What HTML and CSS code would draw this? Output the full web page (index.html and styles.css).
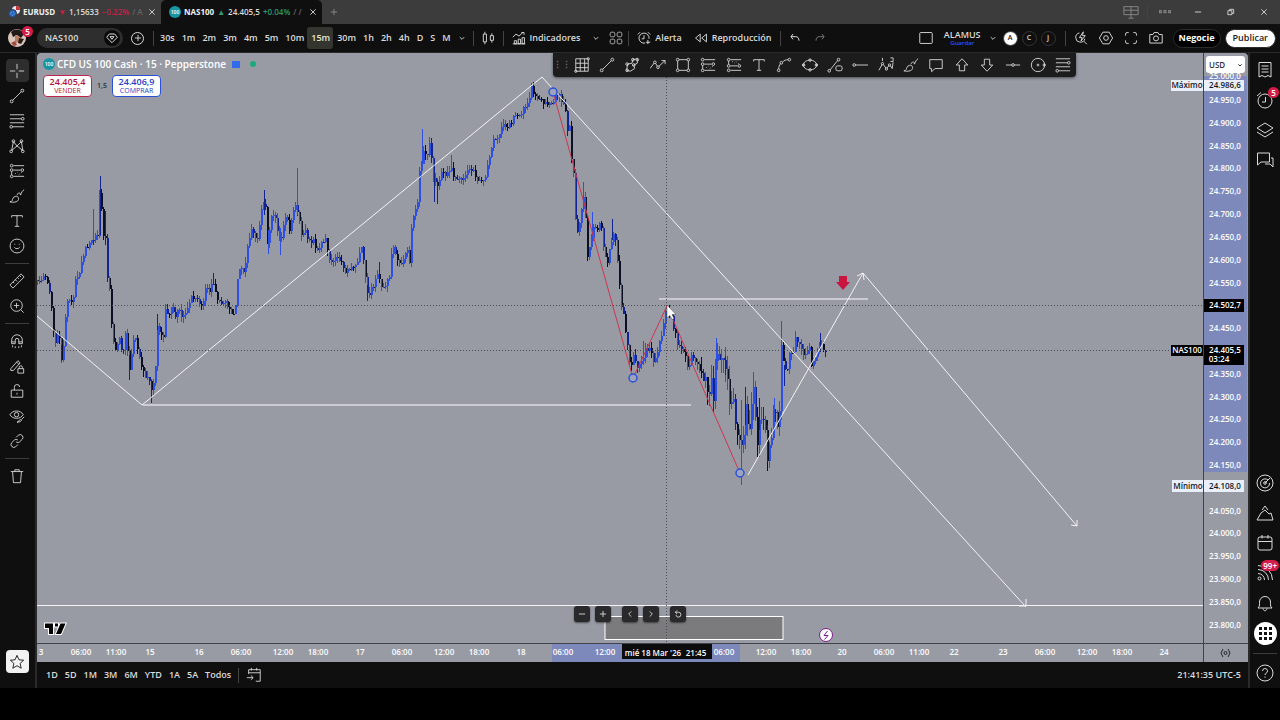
FILE: index.html
```html
<!DOCTYPE html>
<html lang="es">
<head>
    <meta charset="UTF-8">
    <title>NAS100</title>
    <link rel="stylesheet" href="styles.css">
</head>
<body>
    <svg class="defs" aria-hidden="true">
        <symbol id="i-close" viewBox="0 0 18 18"><path d="M3 3l12 12M15 3L3 15"/></symbol>
        <symbol id="i-plus" viewBox="0 0 18 18"><path d="M9 2v14M2 9h14"/></symbol>
        <symbol id="i-minus" viewBox="0 0 18 18"><path d="M2 9h14"/></symbol>
        <symbol id="i-down" viewBox="0 0 18 18"><path d="M4 7l5 5 5-5"/></symbol>
        <symbol id="i-left" viewBox="0 0 18 18"><path d="M12 3L6 9l6 6"/></symbol>
        <symbol id="i-right" viewBox="0 0 18 18"><path d="M6 3l6 6-6 6"/></symbol>
        <symbol id="i-reset" viewBox="0 0 18 18"><path d="M3 5h7a5.500 5.500 0 1 1-5.500 6M7 1L3 5l4 4"/></symbol>
        <symbol id="i-cross" viewBox="0 0 18 18"><path d="M9 1v6M9 11v6M1 9h6M11 9h6"/></symbol>
        <symbol id="i-line" viewBox="0 0 18 18"><circle cx="3" cy="15" r="1.600"/><circle cx="15" cy="3" r="1.600"/><path d="M4.200 13.800L13.800 4.200"/></symbol>
        <symbol id="i-fib" viewBox="0 0 18 18"><path d="M1 2h16M1 6.500h13M1 11h16M4 15.500h13"/><circle cx="15.500" cy="6.500" r="1.500"/><circle cx="2.500" cy="15.500" r="1.500"/></symbol>
        <symbol id="i-pattern" viewBox="0 0 18 18"><path d="M3 14L5 4l4 5 5-5 1.500 10L9 9l-6 5"/><circle cx="5" cy="3.500" r="1.500"/><circle cx="14" cy="3.500" r="1.500"/><circle cx="2.500" cy="15" r="1.500"/><circle cx="15.500" cy="15" r="1.500"/></symbol>
        <symbol id="i-forecast" viewBox="0 0 18 18"><circle cx="3" cy="3" r="1.500"/><circle cx="3" cy="8" r="1.500"/><circle cx="3" cy="15" r="1.500"/><circle cx="15" cy="8" r="1.500"/><path d="M5 3h12M5 8h8M5 15h12M3 9.500v4"/><path d="M7 12l3-2M11 13l4-3" stroke-dasharray="1 2"/></symbol>
        <symbol id="i-short" viewBox="0 0 18 18"><circle cx="3" cy="3" r="1.500"/><circle cx="3" cy="10" r="1.500"/><circle cx="3" cy="15" r="1.500"/><circle cx="15" cy="10" r="1.500"/><path d="M5 3h12M5 10h8M5 15h12M3 4.500v4"/><path d="M7 5l3 2M11 5l4 3" stroke-dasharray="1 2"/></symbol>
        <symbol id="i-brush" viewBox="0 0 18 18"><path d="M1 15.500c3 0 2.500-2 3.500-4s4-3 5.500-1.500 1 4.500-2 5.500-5 .500-7 0zM9 8c1.500-3 3-4 4 0 1-3 2-5 4-6"/></symbol>
        <symbol id="i-text" viewBox="0 0 18 18"><path d="M3 5V3h12v2M9 3v12M6.500 15h5"/></symbol>
        <symbol id="i-smile" viewBox="0 0 18 18"><circle cx="9" cy="9" r="7.800"/><path d="M6 10.500c1 2 5 2 6 0M6.500 6.500v1M11.500 6.500v1"/></symbol>
        <symbol id="i-ruler" viewBox="0 0 18 18"><path d="M1 13.500L13.500 1 17 4.500 4.500 17zM4.500 10l1.500 1.500M7 7.500l2 2M9.500 5L11 6.500M12 3l1.500 1.500"/></symbol>
        <symbol id="i-zoom" viewBox="0 0 18 18"><circle cx="8.500" cy="8.500" r="6.500"/><path d="M13.500 13.500L16.500 16.500M8.500 5.500v6M5.500 8.500h6"/></symbol>
        <symbol id="i-magnet" viewBox="0 0 18 18"><path d="M3 12V8a6 6 0 0 1 12 0v4h-4V8a2 2 0 0 0-4 0v4zM3 10h4M11 10h4M4 14v2M7 15v2M11 15v2M14 14v2"/></symbol>
        <symbol id="i-penlock" viewBox="0 0 18 18"><path d="M2 12L10 3l2.500 2.500L5 14H2zM8.500 4.500L11 7M10 12h6.500v5H10zM11.500 12v-1.500a1.700 1.700 0 0 1 3.500 0V12"/></symbol>
        <symbol id="i-lock" viewBox="0 0 18 18"><path d="M2.500 8h13v8h-13zM6 8V5a3 3 0 0 1 6-.500M9 11v2"/></symbol>
        <symbol id="i-eye" viewBox="0 0 18 18"><path d="M1 7.500C4 2 13 2 16 7.500 13 13 4 13 1 7.500z"/><circle cx="8.500" cy="7.500" r="2.500"/><path d="M9 16c2 0 2-3 4-3s1 3-4 3zM14 13l3-3"/></symbol>
        <symbol id="i-link" viewBox="0 0 18 18"><path d="M8 5l2.500-2.500a3.200 3.200 0 0 1 4.500 4.500L12 10c-1 1-3 1-4 0M10 13l-2.500 2.500A3.200 3.200 0 0 1 3 11l3-3c1-1 3-1 4 0"/></symbol>
        <symbol id="i-trash" viewBox="0 0 18 18"><path d="M2 4h14M6.500 4V2h5v2M4 4l1 12.500h8L14 4"/></symbol>
        <symbol id="i-star" viewBox="0 0 18 18"><path d="M9 1.500l2.200 5 5.300.5-4 3.600 1.200 5.400L9 13.200 4.300 16l1.200-5.400-4-3.600 5.300-.5z"/></symbol>
        <symbol id="i-layout" viewBox="0 0 18 18"><rect x="1" y="2" width="16" height="14" rx="1"/></symbol>
        <symbol id="i-candles" viewBox="0 0 18 18"><path d="M3 4h4v10H3zM5 1v3M5 14v3M12 6h4v6h-4zM14 3v3M14 12v3"/></symbol>
        <symbol id="i-indic" viewBox="0 0 18 18"><path d="M1 8l4-4 4 2.500L14 2M12 2h3.500v3M3 16.500v-4h3v4zM8 16.500v-6h3v6zM13 16.500v-8h3v8zM1 16.500h16"/></symbol>
        <symbol id="i-tiles" viewBox="0 0 18 18"><rect x="1.500" y="1.500" width="6" height="6" rx="2"/><rect x="10.500" y="1.500" width="6" height="6" rx="2"/><rect x="1.500" y="10.500" width="6" height="6" rx="2"/><rect x="10.500" y="10.500" width="6" height="6" rx="2"/></symbol>
        <symbol id="i-alarm" viewBox="0 0 18 18"><path d="M10.500 15.500A6.500 6.500 0 1 1 15.500 10M9 5.500V10H6M1 4.500L4 1.500M14 1.500l3 3M14 11.500v5.500M11.500 14.500h5.500"/></symbol>
        <symbol id="i-clock" viewBox="0 0 18 18"><circle cx="9" cy="10" r="7"/><path d="M9.500 6v5H6M1 5L5 1.500"/></symbol>
        <symbol id="i-replay" viewBox="0 0 18 18"><path d="M8 4v10L2 9zM16 4v10l-6-5z"/></symbol>
        <symbol id="i-undo" viewBox="0 0 18 18"><path d="M6 3L3 7l3 4M3 7h7c3 0 5 2 5 6"/></symbol>
        <symbol id="i-redo" viewBox="0 0 18 18"><path d="M12 3l3 4-3 4M15 7H8c-3 0-5 2-5 6"/></symbol>
        <symbol id="i-quick" viewBox="0 0 18 18"><path d="M7 2.500a6 6 0 1 0 7 7.500M12.500 13l4 4M12 1L7 8.500h3.500L9 13l5.500-7H11z"/></symbol>
        <symbol id="i-hex" viewBox="0 0 18 18"><path d="M5 1.500h8L17.500 9 13 16.500H5L.5 9z"/><circle cx="9" cy="9" r="3"/></symbol>
        <symbol id="i-full" viewBox="0 0 18 18"><path d="M2 6V4a2 2 0 0 1 2-2h2M12 2h2a2 2 0 0 1 2 2v2M16 12v2a2 2 0 0 1-2 2h-2M6 16H4a2 2 0 0 1-2-2v-2"/></symbol>
        <symbol id="i-camera" viewBox="0 0 18 18"><path d="M1 4.500h4L6.500 2h5L13 4.500h4v11H1z"/><circle cx="9" cy="9.500" r="3.200"/></symbol>
        <symbol id="i-grid" viewBox="0 0 18 18"><path d="M2 2h14v14H2zM7 2v14M12 2v14M2 7h14M2 12h14"/><circle cx="16" cy="2" r="1.300"/><circle cx="2" cy="16" r="1.300"/></symbol>
        <symbol id="i-poly" viewBox="0 0 18 18"><path d="M4 8l5-1 1-4 5-1v5l-4 2 1 4-5 3-4-1z"/><circle cx="3.500" cy="8" r="1.500"/><circle cx="10" cy="3" r="1.500"/><circle cx="15" cy="3" r="1.500"/><circle cx="11" cy="9" r="1.500"/><circle cx="3.500" cy="15" r="1.500"/></symbol>
        <symbol id="i-path" viewBox="0 0 18 18"><path d="M0 13l4.500-6M6.500 7.500L8 10M10 10.500L17 4M13 4h4v4"/><circle cx="5.500" cy="6" r="1.500"/><circle cx="9" cy="11.500" r="1.500"/></symbol>
        <symbol id="i-rect" viewBox="0 0 18 18"><path d="M4.500 3h9M4.500 15h9M3 4.500v9M15 4.500v9"/><circle cx="3" cy="3" r="1.500"/><circle cx="15" cy="3" r="1.500"/><circle cx="3" cy="15" r="1.500"/><circle cx="15" cy="15" r="1.500"/></symbol>
        <symbol id="i-curve" viewBox="0 0 18 18"><path d="M3 13.500C3 11 4 9 5 7.500M7.500 5.500C9 4 11 3 13.500 3"/><circle cx="3" cy="15" r="1.500"/><circle cx="15" cy="3" r="1.500"/><circle cx="6" cy="6.500" r="1.500"/></symbol>
        <symbol id="i-ellipse" viewBox="0 0 18 18"><ellipse cx="9" cy="9" rx="7.500" ry="5.500"/><circle cx="1.800" cy="9" r="1.400"/><circle cx="16.200" cy="9" r="1.400"/><circle cx="9" cy="3.500" r="1.400"/><circle cx="9" cy="14.500" r="1.400"/></symbol>
        <symbol id="i-shape" viewBox="0 0 18 18"><path d="M3.500 14.500L12 4"/><circle cx="2.500" cy="15.500" r="1.500"/><circle cx="13" cy="3" r="1.500"/><rect x="10" y="10" width="7" height="5.500" rx="2"/></symbol>
        <symbol id="i-ray" viewBox="0 0 18 18"><circle cx="2.500" cy="9" r="1.500"/><path d="M4 9h14"/></symbol>
        <symbol id="i-wave" viewBox="0 0 18 18"><path d="M1 15l3.500-6.500M6 8.500l3 4M10 12.500l2.500-3M14 10l2 3 1-7M5 1v3.500M14 1h3v4h-3"/><circle cx="5" cy="7.500" r="1.300"/><circle cx="9.500" cy="13.500" r="1.300"/><circle cx="13" cy="9" r="1.300"/></symbol>
        <symbol id="i-note" viewBox="0 0 18 18"><path d="M2 3h14v10H8l-4 3.500V13H2z"/></symbol>
        <symbol id="i-up" viewBox="0 0 18 18"><path d="M9 2l6.500 7H12v6.500H6V9H2.500z"/></symbol>
        <symbol id="i-dn" viewBox="0 0 18 18"><path d="M9 16l6.500-7H12V2.500H6V9H2.500z"/></symbol>
        <symbol id="i-hline" viewBox="0 0 18 18"><circle cx="9" cy="9" r="1.500"/><path d="M1 9h6.500M10.500 9H17"/></symbol>
        <symbol id="i-circle" viewBox="0 0 18 18"><circle cx="9" cy="9" r="7.500"/><circle cx="9" cy="9" r="1"/><circle cx="16" cy="9" r="1.300"/></symbol>
        <symbol id="i-news" viewBox="0 0 18 18"><path d="M3 1.500h12V16l-3-1.500L9 16l-3-1.500L3 16zM5.500 5h7M5.500 8h7M5.500 11h7"/></symbol>
        <symbol id="i-layers" viewBox="0 0 18 18"><path d="M9 2l8 5-8 5-8-5zM1 11l8 5 8-5"/></symbol>
        <symbol id="i-chat" viewBox="0 0 18 18"><path d="M1.500 2h12v9H5l-3.500 3zM15 7h2v9l-3-3H9"/></symbol>
        <symbol id="i-radar" viewBox="0 0 18 18"><circle cx="9" cy="9" r="8"/><path d="M12 6a4.500 4.500 0 1 0 1.500 3M9 9l5-5"/><circle cx="9" cy="9" r="1.300"/></symbol>
        <symbol id="i-mount" viewBox="0 0 18 18"><path d="M6 6l3-4 3 4M1 16l4-7 4-3 4 4 2-1 2 7z"/></symbol>
        <symbol id="i-cal" viewBox="0 0 18 18"><rect x="2" y="3" width="14" height="13" rx="2"/><path d="M2 7.500h14M6 1v3.500M12 1v3.500"/></symbol>
        <symbol id="i-goto" viewBox="0 0 18 18"><path d="M3 8V3h13v13h-5M3 6.500h13M6 1v3M12 1v3M1 12h7M5.500 9.500L8 12l-2.500 2.500"/></symbol>
        <symbol id="i-feed" viewBox="0 0 18 18"><circle cx="3.500" cy="14.500" r="1.500"/><path d="M2 9.500A6.500 6.500 0 0 1 8.500 16M2 5.500A10.500 10.500 0 0 1 12.500 16M2 1.500A14.500 14.500 0 0 1 16.500 16"/></symbol>
        <symbol id="i-bell" viewBox="0 0 18 18"><path d="M2 14c2-2 1.500-4 1.500-6a5.500 5.500 0 0 1 11 0c0 2-.5 4 1.500 6zM7 14.500c.500 3 3.500 3 4 0"/></symbol>
        <symbol id="i-help" viewBox="0 0 18 18"><circle cx="9" cy="9" r="8"/><path d="M6.500 7a2.500 2.500 0 1 1 3.500 2.300c-.700.400-1 .700-1 1.700M9 12.500v1.200"/></symbol>
        <symbol id="i-panels" viewBox="0 0 18 18"><path d="M1 3h16v9H1zM9 3v9M1 7h16M9 12v4M6 16h6"/></symbol>
        <symbol id="i-dots" viewBox="0 0 18 18"><rect x="0.500" y="7" width="3" height="3"/><rect x="7.500" y="7" width="3" height="3"/><rect x="14.500" y="7" width="3" height="3"/></symbol>
        <symbol id="i-restore" viewBox="0 0 18 18"><path d="M2 6h9v9H2zM6 6V3h9v9h-4"/></symbol>
        <symbol id="i-gem" viewBox="0 0 18 18"><path d="M5 3h8l4 5-8 8-8-8zM6 7l3 4 3-4z"/></symbol>
    </svg>

    <div class="tabs">
        <div class="tab">
            <svg class="pair" viewBox="0 0 12 12"><circle cx="8" cy="4" r="4" fill="#dfe6f5"/><path d="M8 0a4 4 0 0 1 4 4H8z" fill="#c33"/><circle cx="4.500" cy="7.500" r="4" fill="#1d5fb8" stroke="#3c3c3c"/><circle cx="4.500" cy="7.500" r="1.800" fill="none" stroke="#9fc3f0" stroke-dasharray="1 1"/></svg>
            <span class="tab-name">EURUSD</span><span class="neg">▼</span><span>1,15633</span><span class="neg">−0.22%</span><span class="fade">/ A</span>
            <button class="tab-close" aria-label="Cerrar"><svg class="icon tiny"><use href="#i-close"/></svg></button>
        </div>
        <div class="tab active">
            <span class="coin">100</span>
            <span class="tab-name">NAS100</span><span class="pos">▲</span><span>24.405,5</span><span class="pos">+0.04%</span><span class="fade">/ /</span>
            <button class="tab-close" aria-label="Cerrar"><svg class="icon tiny"><use href="#i-close"/></svg></button>
        </div>
        <button class="tab-add" aria-label="Nueva pestaña"><svg class="icon tiny dim"><use href="#i-plus"/></svg></button>
        <div class="window-buttons">
            <button aria-label="Paneles"><svg class="icon dim"><use href="#i-panels"/></svg></button>
            <span class="sep"></span>
            <button aria-label="Más"><svg class="icon small dim"><use href="#i-dots"/></svg></button>
            <button aria-label="Minimizar"><svg class="icon tiny"><use href="#i-minus"/></svg></button>
            <button aria-label="Restaurar"><svg class="icon tiny"><use href="#i-restore"/></svg></button>
            <button aria-label="Cerrar ventana"><svg class="icon tiny"><use href="#i-close"/></svg></button>
        </div>
    </div>

    <header class="header">
        <button class="avatar" aria-label="Perfil">
            <svg viewBox="0 0 18 18"><circle cx="9" cy="9" r="9" fill="#d9c5bb"/><path d="M3 3c4-4 11-3 13 2l-3 4-4-3-4 2z" fill="#231a18"/><path d="M7 6l5 2-1 5-4 1z" fill="#b98066"/><path d="M11 9l5 1-3 5-3-1z" fill="#2b1c1a"/><path d="M3 14l4-2 2 4-3 1z" fill="#a04a3c"/></svg>
            <span class="badge">5</span>
        </button>
        <button class="symbol">NAS100 <span class="gem"><svg class="icon small"><use href="#i-gem"/></svg></span></button>
        <button class="compare" aria-label="Comparar"><svg class="icon tiny"><use href="#i-plus"/></svg></button>
        <span class="sep"></span>
        <div class="intervals">
            <button>30s</button><button>1m</button><button>2m</button><button>3m</button><button>4m</button><button>5m</button><button>10m</button><button class="on">15m</button><button>30m</button><button>1h</button><button>2h</button><button>4h</button><button>D</button><button>S</button><button>M</button>
            <button aria-label="Intervalos"><svg class="icon tiny"><use href="#i-down"/></svg></button>
        </div>
        <span class="sep"></span>
        <button class="tool" aria-label="Velas"><svg class="icon"><use href="#i-candles"/></svg></button>
        <span class="sep"></span>
        <button class="labelled"><svg class="icon"><use href="#i-indic"/></svg>Indicadores</button>
        <button class="tool narrow" aria-label="Favoritos"><svg class="icon tiny"><use href="#i-down"/></svg></button>
        <button class="tool narrow" aria-label="Plantillas"><svg class="icon dim-light"><use href="#i-tiles"/></svg></button>
        <span class="sep"></span>
        <button class="labelled"><svg class="icon"><use href="#i-alarm"/></svg>Alerta</button>
        <button class="labelled"><svg class="icon"><use href="#i-replay"/></svg>Reproducción</button>
        <span class="sep"></span>
        <button class="tool" aria-label="Deshacer"><svg class="icon small"><use href="#i-undo"/></svg></button>
        <button class="tool dim" aria-label="Rehacer"><svg class="icon small"><use href="#i-redo"/></svg></button>

        <div class="header-right">
            <button class="tool" aria-label="Diseño"><svg class="icon"><use href="#i-layout"/></svg></button>
            <button class="layout-name">ALAMUS<span>Guardar</span></button>
            <button class="tool narrow" aria-label="Diseños"><svg class="icon tiny"><use href="#i-down"/></svg></button>
            <button class="letter on">A</button><button class="letter">C</button><button class="letter">J</button>
            <span class="sep"></span>
            <button class="tool" aria-label="Búsqueda"><svg class="icon"><use href="#i-quick"/></svg></button>
            <button class="tool" aria-label="Ajustes"><svg class="icon"><use href="#i-hex"/></svg></button>
            <button class="tool" aria-label="Pantalla completa"><svg class="icon"><use href="#i-full"/></svg></button>
            <button class="tool" aria-label="Captura"><svg class="icon"><use href="#i-camera"/></svg></button>
            <button class="pill">Negocie</button>
            <button class="pill light">Publicar</button>
        </div>
    </header>

    <div class="main">
        <nav class="tools">
            <button class="on" aria-label="Cursor"><svg class="icon"><use href="#i-cross"/></svg></button>
            <button aria-label="Línea"><svg class="icon"><use href="#i-line"/></svg></button>
            <button aria-label="Fibonacci"><svg class="icon"><use href="#i-fib"/></svg></button>
            <button aria-label="Patrones"><svg class="icon"><use href="#i-pattern"/></svg></button>
            <button aria-label="Previsión"><svg class="icon"><use href="#i-forecast"/></svg></button>
            <button aria-label="Pincel"><svg class="icon"><use href="#i-brush"/></svg></button>
            <button aria-label="Texto"><svg class="icon"><use href="#i-text"/></svg></button>
            <button aria-label="Iconos"><svg class="icon"><use href="#i-smile"/></svg></button>
            <hr>
            <button aria-label="Medir"><svg class="icon"><use href="#i-ruler"/></svg></button>
            <button aria-label="Acercar"><svg class="icon"><use href="#i-zoom"/></svg></button>
            <hr>
            <button aria-label="Imán"><svg class="icon"><use href="#i-magnet"/></svg></button>
            <button aria-label="Modo dibujo"><svg class="icon"><use href="#i-penlock"/></svg></button>
            <button aria-label="Bloquear"><svg class="icon"><use href="#i-lock"/></svg></button>
            <button aria-label="Ocultar"><svg class="icon"><use href="#i-eye"/></svg></button>
            <button aria-label="Sincronizar"><svg class="icon"><use href="#i-link"/></svg></button>
            <hr>
            <button aria-label="Eliminar"><svg class="icon"><use href="#i-trash"/></svg></button>
            <button class="star" aria-label="Barra de favoritos"><svg class="icon"><use href="#i-star"/></svg></button>
        </nav>

        <div class="center">
            <div class="chart">
                <svg class="plot" id="plot" viewBox="37 53 1211 609">
                    <rect x="1204" y="76" width="43" height="396" fill="#7e89bb"/>
                    <rect x="552" y="644" width="188" height="18" fill="#7e89bb"/>
                    <path class="axis-line" d="M37 643.500H1248M1203.500 53V662"/>
                    <rect x="605" y="616.500" width="178" height="23" fill="#7b7b7d" stroke="#fff"/>
                    <path class="level" d="M143 405H691M659 299H868"/>
                    <path class="white" d="M37 605.500H1203"/>
                    <g id="candles" shape-rendering="crispEdges"></g>
                    <path class="white" d="M37 316L142 405 542 77 1026 607M748 475L863 273 1077 526"/>
                    <path class="white" d="M1019 606h7v-7M1071 525l6 1v-6M857 276l6-3 1 7"/>
                    <path class="trend" d="M553 92L633 378 667 306 740 473"/>
                    <path class="dotted" d="M666.500 53V643M37 305.500H1203M37 350.500H1172"/>
                    <g class="anchors"><circle cx="553" cy="92" r="4"/><circle cx="633" cy="378" r="4"/><circle cx="740" cy="473" r="4"/></g>
                    <path d="M839 276h8v6h3l-7 8-7-8h3z" fill="#c9163f"/>
                    <path d="M667 305v13l3-2.500 2 4 2-1-2-4h4z" fill="#fff" stroke="#444" stroke-width="0.500"/>
                    <circle cx="826" cy="635" r="6.500" fill="#fff" stroke="#7d1a8c"/>
                    <path d="M827.500 631l-3.500 4.500h4l-3.500 4" fill="none" stroke="#7d1a8c"/>
                    <path class="brand" d="M45 623.500h8V634h-4v-6h-4zM55 623.500h3v3h-3zM60.500 623.500h5L61 634h-5z"/>
                    <g id="labels"></g>
                    <g class="axis-icon"><circle cx="1225.500" cy="653" r="1.500"/><path d="M1223 649l-2 4 2 4M1228 649l2 4-2 4"/></g>
                </svg>

                <div class="legend">
                    <div class="legend-title"><span class="coin">100</span>CFD US 100 Cash · 15 · Pepperstone<i class="flag"></i><i class="dot"></i></div>
                    <div class="quotes">
                        <button class="quote sell">24.405,4<span>VENDER</span></button>
                        <span class="spread">1,5</span>
                        <button class="quote buy">24.406,9<span>COMPRAR</span></button>
                    </div>
                </div>

                <div class="drawbar">
                    <span class="grip">⋮⋮</span>
                    <button aria-label="Rejilla"><svg class="icon"><use href="#i-grid"/></svg></button>
                    <button aria-label="Línea de tendencia"><svg class="icon"><use href="#i-line"/></svg></button>
                    <button aria-label="Polilínea"><svg class="icon"><use href="#i-poly"/></svg></button>
                    <button aria-label="Ruta"><svg class="icon"><use href="#i-path"/></svg></button>
                    <button aria-label="Rectángulo"><svg class="icon"><use href="#i-rect"/></svg></button>
                    <button aria-label="Posición larga"><svg class="icon"><use href="#i-forecast"/></svg></button>
                    <button aria-label="Posición corta"><svg class="icon"><use href="#i-short"/></svg></button>
                    <button aria-label="Texto libre"><svg class="icon"><use href="#i-text"/></svg></button>
                    <button aria-label="Curva"><svg class="icon"><use href="#i-curve"/></svg></button>
                    <button aria-label="Elipse"><svg class="icon"><use href="#i-ellipse"/></svg></button>
                    <button aria-label="Línea informativa"><svg class="icon"><use href="#i-shape"/></svg></button>
                    <button aria-label="Rayo horizontal"><svg class="icon"><use href="#i-ray"/></svg></button>
                    <button aria-label="Onda de Elliott"><svg class="icon"><use href="#i-wave"/></svg></button>
                    <button aria-label="Pincel libre"><svg class="icon"><use href="#i-brush"/></svg></button>
                    <button aria-label="Comentario"><svg class="icon"><use href="#i-note"/></svg></button>
                    <button aria-label="Flecha arriba"><svg class="icon"><use href="#i-up"/></svg></button>
                    <button aria-label="Flecha abajo"><svg class="icon"><use href="#i-dn"/></svg></button>
                    <button aria-label="Línea horizontal"><svg class="icon"><use href="#i-hline"/></svg></button>
                    <button aria-label="Círculo"><svg class="icon"><use href="#i-circle"/></svg></button>
                    <button aria-label="Retroceso"><svg class="icon"><use href="#i-fib"/></svg></button>
                </div>

                <div class="currency">
                    <select aria-label="Divisa"><option>USD</option><option>EUR</option></select>
                    <svg class="icon caret"><use href="#i-down"/></svg>
                </div>

                <div class="chart-nav">
                    <button aria-label="Alejar"><svg class="icon tiny"><use href="#i-minus"/></svg></button>
                    <button aria-label="Acercar gráfico"><svg class="icon tiny"><use href="#i-plus"/></svg></button>
                    <button class="spaced" aria-label="Anterior"><svg class="icon tiny"><use href="#i-left"/></svg></button>
                    <button aria-label="Siguiente"><svg class="icon tiny"><use href="#i-right"/></svg></button>
                    <button class="spaced" aria-label="Restablecer"><svg class="icon tiny"><use href="#i-reset"/></svg></button>
                </div>
            </div>

            <footer class="ranges">
                <button>1D</button><button>5D</button><button>1M</button><button>3M</button><button>6M</button><button>YTD</button><button>1A</button><button>5A</button><button>Todos</button>
                <span class="sep"></span>
                <button aria-label="Ir a"><svg class="icon"><use href="#i-goto"/></svg></button>
                <span class="clock">21:41:35 UTC-5</span>
            </footer>
        </div>

        <aside class="side">
            <button aria-label="Lista"><svg class="icon"><use href="#i-news"/></svg></button>
            <button aria-label="Alertas"><svg class="icon"><use href="#i-clock"/></svg><span class="badge">5</span></button>
            <button aria-label="Objetos"><svg class="icon"><use href="#i-layers"/></svg></button>
            <button aria-label="Chats"><svg class="icon"><use href="#i-chat"/></svg></button>
            <button class="push" aria-label="Analizador"><svg class="icon"><use href="#i-radar"/></svg></button>
            <button aria-label="Pine"><svg class="icon"><use href="#i-mount"/></svg></button>
            <button aria-label="Calendario"><svg class="icon"><use href="#i-cal"/></svg></button>
            <button aria-label="Noticias"><svg class="icon"><use href="#i-feed"/></svg><span class="badge">99+</span></button>
            <button aria-label="Notificaciones"><svg class="icon"><use href="#i-bell"/></svg></button>
            <button aria-label="Productos"><span class="apps"><i></i><i></i><i></i><i></i><i></i><i></i><i></i><i></i><i></i></span></button>
            <hr>
            <button aria-label="Ayuda"><svg class="icon"><use href="#i-help"/></svg></button>
        </aside>
    </div>

    <script src="script.js"></script>
</body>
</html>
```

FILE: styles.css
```css
* {
    box-sizing: border-box;
}
body {
    margin: 0;
    background: #000;
    color: #dbdbdb;
    font-family: "Open Sans", "Noto Sans", sans-serif;
    font-size: 9px;
    font-weight: 600;
    line-height: 12px;
}
button {
    display: flex;
    align-items: center;
    justify-content: center;
    padding: 0;
    border: none;
    background: none;
    color: inherit;
    font: inherit;
    cursor: pointer;
}
.defs {
    display: none;
}
.icon {
    width: 16px;
    height: 16px;
    flex: none;
    fill: none;
    stroke: currentColor;
    stroke-width: 1;
}
.icon.small {
    width: 12px;
    height: 12px;
    stroke-width: 1.5;
}
.icon.tiny {
    width: 8px;
    height: 8px;
    stroke-width: 2;
}
.dim {
    opacity: 0.5;
}
.dim-light {
    opacity: 0.8;
}
.sep {
    width: 1px;
    height: 15px;
    background: #434343;
    flex: none;
}
.coin {
    width: 12px;
    height: 12px;
    flex: none;
    border-radius: 50%;
    background: #1795a3;
    color: #fff;
    font-size: 5px;
    line-height: 12px;
    text-align: center;
}
.badge {
    position: absolute;
    top: 2px;
    right: 1px;
    min-width: 11px;
    padding: 0 2px;
    border-radius: 6px;
    background: #d41c48;
    color: #fff;
    font-size: 8px;
    line-height: 11px;
}

/* Window tabs */
.tabs {
    display: flex;
    height: 24px;
    background: #3c3c3c;
}
.tab {
    display: flex;
    align-items: center;
    gap: 3px;
    width: 161px;
    flex: none;
    padding: 0 5px 0 8px;
    white-space: nowrap;
    overflow: hidden;
    font-size: 8px;
}
.tab.active {
    border-radius: 5px 5px 0 0;
    background: #0f0f0f;
}
.tab-name {
    color: #f0f0f0;
    font-weight: 700;
}
.tab-close {
    margin-left: auto;
    height: 12px;
}
.tab-add {
    width: 24px;
}
.pair {
    width: 12px;
    height: 12px;
    flex: none;
}
.neg {
    color: #c62246;
}
.pos {
    color: #2c9b6c;
}
.fade {
    color: #666;
}
.window-buttons {
    display: flex;
    align-items: center;
    margin-left: auto;
}
.window-buttons button {
    width: 33px;
    height: 24px;
}

/* Main header */
.header {
    display: flex;
    align-items: center;
    height: 29px;
    border-bottom: 1px solid #2a2a2a;
    background: #0f0f0f;
}
.header .icon:not(.small):not(.tiny) {
    width: 14px;
    height: 14px;
    stroke-width: 1.2;
}
.avatar {
    position: relative;
    width: 34px;
    height: 28px;
}
.avatar svg {
    width: 18px;
    height: 18px;
}
.symbol {
    width: 86px;
    height: 20px;
    margin-left: 3px;
    padding: 0 3px 0 8px;
    justify-content: space-between;
    border-radius: 10px;
    background: #2e2e2e;
}
.gem {
    display: flex;
    padding: 2px;
    border-radius: 50%;
    background: #0a0a0a;
}
.compare {
    width: 13px;
    height: 13px;
    margin: 0 7px 0 8px;
    border: 1px solid #dbdbdb;
    border-radius: 50%;
}
.intervals {
    display: flex;
    margin: 0 2px 0 0;
}
.intervals button {
    height: 22px;
    padding: 0 3px 0 4px;
    border-radius: 3px;
}
.intervals .on {
    background: #35352f;
    color: #e6e6cf;
}
.tool {
    width: 25px;
    height: 25px;
}
.tool.narrow {
    width: 20px;
}
.header .sep {
    margin: 0 2px;
}
.labelled {
    height: 25px;
    gap: 4px;
    padding: 0 6px;
}
.header-right {
    display: flex;
    align-items: center;
    margin-left: auto;
    padding-right: 4px;
}
.layout-name {
    flex-direction: column;
    padding: 0 2px 0 5px;
    line-height: 9px;
}
.layout-name span {
    color: #2b55f0;
    font-size: 6px;
    line-height: 8px;
}
.letter {
    width: 15px;
    height: 15px;
    margin-right: 4px;
    border: 1px solid #343434;
    border-radius: 50%;
    font-size: 7px;
}
.letter.on {
    background: #fff;
    color: #111;
}
.header .letter + .sep {
    margin: 0 3px 0 5px;
}
.pill {
    height: 19px;
    margin-left: 4px;
    padding: 0 5px;
    border: 1px solid #2c2c2c;
    border-radius: 10px;
    background: #000;
    color: #fff;
    font-weight: 700;
}
.pill.light {
    padding: 0 7px;
    background: #fff;
    color: #222;
    font-weight: 600;
}

/* Body */
.main {
    display: flex;
}
.tools {
    display: flex;
    flex-direction: column;
    align-items: center;
    width: 37px;
    flex: none;
    padding: 5px 1px 14px 0;
    border-right: 2px solid #2a2a2a;
    background: #0f0f0f;
}
.tools button {
    width: 23px;
    height: 23px;
    margin: 1px 0;
    border-radius: 4px;
}
.tools .on {
    background: #2e2e2e;
}
.tools hr,
.side hr {
    width: 24px;
    margin: 5px 0 4px;
    border: none;
    border-top: 1px solid #3d3d3d;
}
.tools .star {
    margin-top: auto;
    background: #f2f2f2;
    color: #111;
}
.center {
    flex: 1;
    min-width: 0;
}
.side {
    display: flex;
    flex-direction: column;
    align-items: center;
    width: 32px;
    flex: none;
    padding-top: 2px;
    border-left: 2px solid #2a2a2a;
    background: #0f0f0f;
}
.side button {
    position: relative;
    width: 30px;
    height: 30px;
}
.side .icon {
    width: 18px;
    height: 18px;
}
.side .push {
    margin-top: auto;
}
.apps {
    display: grid;
    grid-template-columns: repeat(3, 3px);
    gap: 2px;
    padding: 5px;
    border-radius: 50%;
    background: #fff;
    width: 23px;
    height: 23px;
    place-content: center;
}
.apps i {
    height: 3px;
    background: #111;
}

/* Chart */
.chart {
    position: relative;
    border-radius: 4px 4px 0 0;
    background: #989ba4;
    overflow: hidden;
}
.plot {
    display: block;
    width: 100%;
}
.plot text {
    fill: #fff;
    font-size: 8px;
    text-anchor: middle;
}
.plot .dark {
    fill: #15171d;
}
.axis-line {
    stroke: #3f424b;
}
.level {
    stroke: #c9cbd0;
    stroke-width: 2;
}
.white {
    fill: none;
    stroke: #f4f4f4;
}
.trend {
    fill: none;
    stroke: #cf3550;
}
.dotted {
    stroke: #4a4d55;
    stroke-dasharray: 1 2;
}
.anchors {
    fill: #9da3bb;
    stroke: #2b50d8;
    stroke-width: 1.5;
}
.brand {
    fill: #000;
    stroke: #fff;
    stroke-width: 2;
    paint-order: stroke;
}
.axis-icon {
    fill: none;
    stroke: #24262c;
}
.legend {
    position: absolute;
    top: 5px;
    left: 6px;
    color: #fff;
}
.legend-title {
    display: flex;
    align-items: center;
    gap: 2px;
    font-size: 10px;
}
.flag {
    width: 8px;
    height: 7px;
    margin: 0 8px 0 4px;
    background: #2f6bea;
}
.dot {
    width: 6px;
    height: 6px;
    border-radius: 50%;
    background: #1fa97a;
}
.quotes {
    display: flex;
    align-items: center;
    margin-top: 5px;
}
.quote {
    flex-direction: column;
    width: 49px;
    height: 22px;
    border: 1px solid #c0264b;
    border-radius: 4px;
    background: #fff;
    color: #b3123c;
    line-height: 10px;
}
.quote span {
    font-size: 7px;
    font-weight: 400;
    line-height: 8px;
}
.quote.buy {
    border-color: #2b50d8;
    color: #2440c4;
}
.spread {
    width: 20px;
    color: #2c2e35;
    font-size: 7px;
    text-align: center;
}
.drawbar {
    position: absolute;
    top: 0;
    left: 516px;
    display: flex;
    align-items: center;
    width: 523px;
    height: 24px;
    border-radius: 0 0 4px 4px;
    background: #1c1c1c;
    box-shadow: 0 1px 3px rgba(0, 0, 0, 0.5);
}
.drawbar button {
    flex: 1;
    height: 24px;
}
.grip {
    width: 16px;
    color: #666;
    text-align: center;
}
.currency {
    position: absolute;
    top: 3px;
    right: 3px;
    color: #333;
}
.currency select {
    display: block;
    width: 39px;
    height: 17px;
    padding: 0 3px;
    border: none;
    border-radius: 3px;
    background: #fff;
    color: #333;
    font: inherit;
    font-size: 8px;
    appearance: none;
}
.caret {
    position: absolute;
    top: 6px;
    right: 2px;
    width: 6px;
    height: 6px;
    stroke-width: 3;
    pointer-events: none;
}
.chart-nav {
    position: absolute;
    bottom: 40px;
    left: 537px;
    display: flex;
    gap: 5px;
}
.chart-nav button {
    width: 16px;
    height: 16px;
    border-radius: 3px;
    background: #29292b;
    box-shadow: 0 1px 2px rgba(0, 0, 0, 0.5);
}
.chart-nav .spaced {
    margin-left: 6px;
}
.ranges {
    display: flex;
    align-items: center;
    gap: 7px;
    height: 26px;
    padding: 0 7px 0 9px;
    background: #0f0f0f;
}
.clock {
    margin-left: auto;
}
```

FILE: script.js
```js
const NS = 'http://www.w3.org/2000/svg';
const candles = document.getElementById('candles');
const labels = document.getElementById('labels');

// closing path of the session, x/y in chart units
const path = [
    [37, 284], [40, 279], [44, 275], [47, 281], [50, 295], [52, 322], [54, 345], [57, 333], [60, 340], [61, 358],
    [63, 345], [65, 315], [67, 302], [70, 303], [74, 295], [75, 277], [78, 275], [82, 259], [85, 250], [88, 243],
    [91, 242], [94, 236], [97, 238], [99, 192], [101, 211], [103, 235], [106, 240], [106, 270], [109, 288],
    [109, 320], [112, 328], [114, 356], [116, 345], [119, 340], [122, 358], [125, 333], [129, 370], [134, 334],
    [138, 352], [141, 370], [144, 375], [149, 378], [152, 396], [154, 375], [156, 358], [157, 328], [160, 338],
    [164, 336], [165, 312], [168, 315], [171, 305], [175, 316], [178, 306], [182, 319], [187, 308], [192, 296],
    [195, 296], [199, 306], [203, 300], [206, 286], [209, 291], [212, 281], [217, 298], [222, 303], [226, 303],
    [230, 313], [234, 315], [237, 280], [240, 268], [244, 270], [246, 252], [249, 238], [251, 230], [254, 236],
    [258, 240], [260, 215], [262, 202], [264, 205], [266, 212], [267, 245], [270, 222], [274, 210], [277, 230],
    [280, 245], [282, 228], [286, 215], [289, 230], [292, 212], [295, 207], [297, 215], [300, 226], [302, 238],
    [305, 230], [308, 242], [313, 240], [317, 252], [320, 246], [325, 235], [328, 258], [331, 262], [335, 258],
    [340, 260], [345, 272], [352, 270], [357, 260], [361, 248], [364, 262], [366, 290], [369, 293], [372, 288],
    [377, 276], [381, 284], [385, 285], [389, 278], [391, 255], [393, 250], [397, 260], [400, 265], [404, 255],
    [407, 250], [409, 262], [411, 225], [415, 210], [417, 200], [419, 170], [421, 165], [424, 140], [426, 165],
    [428, 145], [430, 145], [432, 172], [437, 188], [440, 178], [442, 172], [447, 174], [451, 166], [454, 180],
    [458, 182], [463, 177], [467, 170], [472, 170], [476, 180], [486, 178], [488, 158], [493, 140], [496, 138],
    [500, 132], [503, 124], [507, 126], [511, 122], [515, 115], [519, 118], [523, 110], [528, 102], [531, 88],
    [534, 96], [540, 101], [543, 104], [546, 102], [550, 104], [554, 98], [558, 95], [561, 100], [564, 105],
    [567, 130], [569, 128], [571, 160], [574, 180], [575, 218], [577, 235], [580, 218], [583, 195], [585, 220],
    [587, 260], [590, 240], [593, 226], [597, 228], [600, 225], [604, 250], [606, 268], [609, 250], [612, 234],
    [615, 240], [618, 275], [620, 300], [622, 310], [625, 330], [628, 352], [630, 375], [633, 355], [637, 370],
    [641, 362], [645, 350], [650, 350], [653, 362], [657, 350], [660, 340], [663, 322], [666, 308], [668, 315],
    [671, 318], [674, 333], [677, 343], [681, 350], [684, 350], [687, 368], [691, 358], [695, 362], [698, 370],
    [702, 380], [706, 385], [708, 403], [711, 385], [713, 400], [716, 350], [720, 360], [725, 370], [729, 400],
    [733, 405], [736, 430], [739, 445], [742, 440], [745, 410], [748, 440], [753, 385], [757, 445], [759, 420],
    [764, 425], [767, 455], [771, 440], [774, 405], [778, 440], [781, 345], [783, 360], [786, 372], [789, 355],
    [793, 350], [795, 340], [799, 343], [804, 355], [809, 345], [811, 365], [815, 358], [818, 350], [820, 338],
    [823, 350], [825, 349]
];

// long wicks: x, top, bottom, rising
const wicks = [
    [100, 176, 235, 0], [105, 211, 245, 0], [93, 209, 240, 1], [297, 168, 215, 1], [264, 190, 215, 0],
    [268, 230, 254, 1], [280, 228, 255, 1], [422, 129, 170, 1], [434, 170, 202, 0], [437, 180, 204, 0],
    [451, 155, 170, 1], [367, 285, 301, 0], [379, 262, 280, 0], [583, 182, 200, 1], [592, 212, 240, 1],
    [612, 219, 240, 0], [781, 321, 420, 1], [741, 400, 485, 1], [716, 338, 370, 1], [725, 356, 375, 0],
    [753, 372, 420, 1], [745, 387, 425, 0], [759, 398, 430, 0], [767, 425, 462, 0], [774, 398, 425, 1],
    [531, 85, 100, 1], [820, 333, 352, 0], [784, 365, 386, 0], [643, 341, 360, 1], [61, 345, 361, 0],
    [129, 355, 380, 0], [157, 314, 330, 0], [213, 273, 285, 0], [151, 380, 403, 0]
];

function rect(x, y, w, h, fill) {
    const r = document.createElementNS(NS, 'rect');
    r.setAttribute('x', x);
    r.setAttribute('y', y);
    r.setAttribute('width', w);
    r.setAttribute('height', Math.max(1, h));
    r.setAttribute('fill', fill);
    candles.appendChild(r);
}

function noise(n) {
    const v = Math.sin(n * 127.1) * 43758.5453;
    return v - Math.floor(v);
}

function color(up, x) {
    if (up) return '#2d50e2';
    return noise(x + 11) > 0.6 ? '#12248f' : '#0c1024';
}

function priceAt(x) {
    let i = 1;
    while (i < path.length - 1 && path[i][0] < x) i++;
    const [x0, y0] = path[i - 1];
    const [x1, y1] = path[i];
    return x1 === x0 ? y1 : y0 + (y1 - y0) * (x - x0) / (x1 - x0);
}

let open = 280;
for (let x = 37; x <= 825; x += 2) {
    const swing = x > 700 && x < 780 ? 14 : 6;
    const close = Math.round(priceAt(x) + (noise(x) - 0.5) * swing);
    const top = Math.min(open, close);
    const bottom = Math.max(open, close);
    const fill = color(close < open, x);
    rect(x, top, 2, bottom - top, fill);
    const above = Math.round(noise(x + 3) * swing);
    const below = Math.round(noise(x + 7) * swing);
    rect(x, top - above, 1, bottom - top + above + below, noise(x + 5) > 0.5 ? '#2d50e2' : fill);
    open = close;
}
wicks.forEach(([x, top, bottom, up]) => rect(x, top, 1, bottom - top, color(up, 0)));

function text(x, y, value, cls) {
    const t = document.createElementNS(NS, 'text');
    t.setAttribute('x', x);
    t.setAttribute('y', y);
    if (cls) t.setAttribute('class', cls);
    t.textContent = value;
    labels.appendChild(t);
}

function tag(x, y, w, h, fill) {
    const r = document.createElementNS(NS, 'rect');
    r.setAttribute('x', x);
    r.setAttribute('y', y);
    r.setAttribute('width', w);
    r.setAttribute('height', h);
    r.setAttribute('fill', fill);
    labels.appendChild(r);
}

function format(p) {
    return Math.floor(p / 1000) + '.' + String(p % 1000).padStart(3, '0') + ',0';
}

text(1225, 79, '25.000,0');
for (let p = 24950; p >= 23800; p -= 50) {
    if (p === 24500 || p === 24400 || p === 24100) continue;
    text(1225, Math.round(103 + (24950 - p) * 0.4563), format(p));
}

tag(1171, 80, 32, 11, '#e9f0fb');
text(1187, 88, 'Máximo', 'dark');
tag(1204, 80, 40, 11, '#e9f0fb');
text(1225, 88, '24.986,6', 'dark');
tag(1172, 480, 31, 12, '#e9f0fb');
text(1188, 489, 'Mínimo', 'dark');
tag(1204, 480, 40, 12, '#e9f0fb');
text(1225, 489, '24.108,0', 'dark');
tag(1204, 299, 40, 13, '#000');
text(1225, 308, '24.502,7');
tag(1171, 345, 32, 11, '#000');
text(1187, 353, 'NAS100');
tag(1204, 345, 40, 20, '#000');
text(1225, 353, '24.405,5');
text(1219, 362, '03:24');

const times = [
    [41, '3'], [81, '06:00'], [116, '11:00'], [150, '15'], [199, '16'], [241, '06:00'], [283, '12:00'],
    [318, '18:00'], [360, '17'], [402, '06:00'], [444, '12:00'], [479, '18:00'], [521, '18'], [563, '06:00'],
    [605, '12:00'], [724, '06:00'], [766, '12:00'], [801, '18:00'], [842, '20'], [884, '06:00'], [919, '11:00'],
    [954, '22'], [1003, '23'], [1045, '06:00'], [1087, '12:00'], [1122, '18:00'], [1164, '24']
];
times.forEach(([x, value]) => text(x, 655, value));
tag(622, 644, 90, 15, '#0b0b0b');
text(653, 656, "mié 18 Mar '26");
text(696, 656, '21:45');
```
